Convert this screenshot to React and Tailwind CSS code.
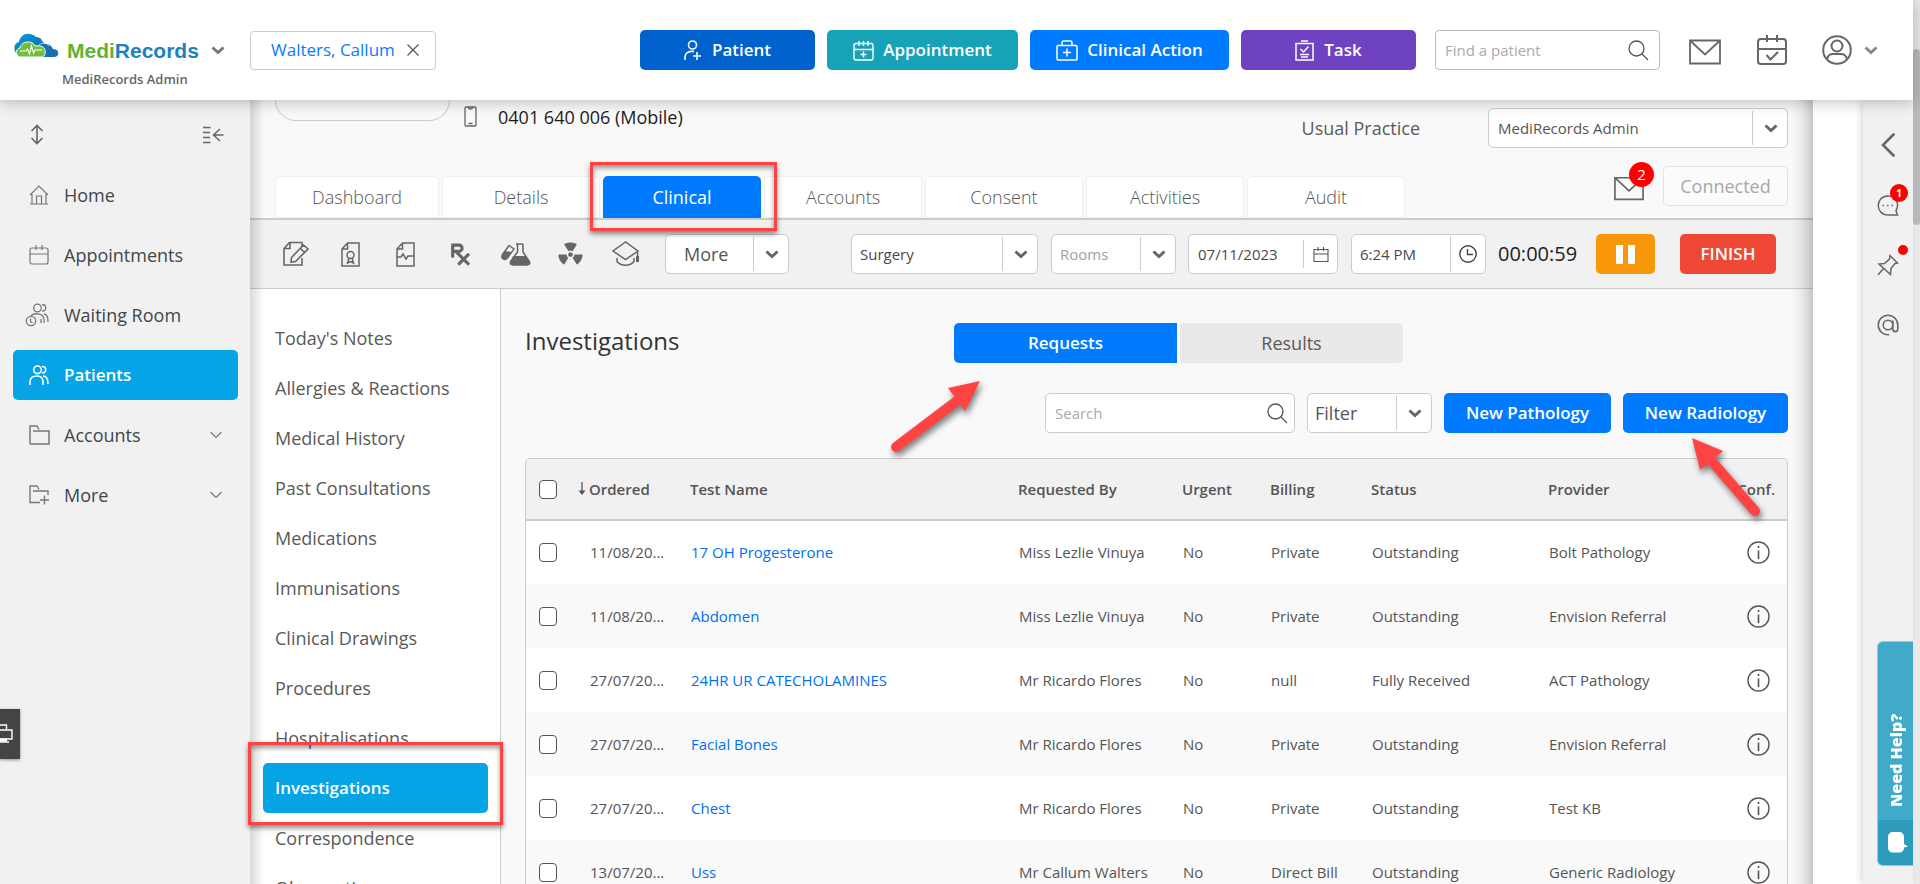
import { FaPrescription, FaRadiation } from "react-icons/fa";

const FONT = "font-['Open_Sans','Noto_Sans',sans-serif]";

function Svg({ w, h, sw = 1.5, children, className = "" }) {
  return (
    <svg
      width={w}
      height={h}
      viewBox={`0 0 ${w} ${h}`}
      fill="none"
      stroke="currentColor"
      strokeWidth={sw}
      className={`shrink-0 ${className}`}
      aria-hidden="true"
    >
      {children}
    </svg>
  );
}

const Chevron = ({ className = "" }) => (
  <Svg w={14} h={9} sw={3} className={className}>
    <path d="M1.500 1.500 7 6.500l5.500-5" />
  </Svg>
);

const ThinChevron = () => (
  <Svg w={12} h={8} sw={1.2} className="text-[#777]">
    <path d="m.5 1 5.500 5.500L11.500 1" />
  </Svg>
);

const SearchIcon = () => (
  <Svg w={21} h={21} sw={1.3} className="text-[#555]">
    <circle cx="8.500" cy="8.500" r="7.500" />
    <path d="m14 14 6 6" />
  </Svg>
);

const MailIcon = ({ w = 32, h = 26 }) => (
  <svg width={w} height={h} viewBox="0 0 32 26" fill="none" stroke="currentColor" strokeWidth="1.800" className="shrink-0" aria-hidden="true">
    <path d="M1 1.500h30v23H1zM1.500 2 16 15.500 30.500 2" />
  </svg>
);

function Logo() {
  return (
    <svg width="45" height="25" viewBox="0 0 45 25" className="shrink-0" aria-hidden="true">
      <defs>
        <linearGradient id="sky" x1="0" y1="0" x2="1" y2="1">
          <stop offset="0" stopColor="#0aa0e4" />
          <stop offset="1" stopColor="#0a5f9f" />
        </linearGradient>
      </defs>
      <path fill="url(#sky)" d="M2 20C-1 16 0 10 5 9 6 3 11 0 15 1c3 0 5 1 7 3 3 0 5 1 6 4l3 3-4 13H5z" />
      <path fill="#176fae" d="M24 24c-1-5 0-11 5-13 5-1 8 1 10 5 4 0 6 3 5 5 0 2-2 3-4 3z" />
      <path fill="none" stroke="#fff" strokeWidth=".7" d="M25 12c3-3 8-2 10 1" />
      <path fill="#72bf3f" stroke="#fff" strokeWidth="1" d="M6 24c-5-1-5-8 0-9 1-4 4-6 8-6 3 0 6 1 7 4 6-1 10 1 10 5 1 3-1 6-4 6z" />
      <path fill="none" stroke="#fff" strokeWidth="1.100" d="M6 18h6l1.500-2 2 5 2-8 2 7 1.500-3h7" />
    </svg>
  );
}

function SelectBox({ id, label, value, width, cellClass = "", textClass = "", dividerClass = "my-[3px] border-[#ccc]", end = "w-9" }) {
  return (
    <div className={`grid h-10 ${width}`}>
      <select
        id={id}
        aria-label={label}
        defaultValue={value}
        className={`col-start-1 row-start-1 h-10 w-full cursor-pointer appearance-none rounded-[5px] border border-[#ccc] bg-white ${cellClass} ${textClass}`}
      >
        <option>{value}</option>
      </select>
      <span className={`pointer-events-none col-start-1 row-start-1 flex items-center justify-center justify-self-end border-l text-[#666] ${end} ${dividerClass}`}>
        <Chevron />
      </span>
    </div>
  );
}

const personPlus = (
  <Svg w={18} h={21} sw={1.6}>
    <circle cx="8.500" cy="5" r="4" />
    <path d="M1 20v-3c0-4 3-6 9-5.500M13 12v8M9 16h8" />
  </Svg>
);
const calendarPlus = (
  <Svg w={21} h={21} sw={1.4}>
    <rect x="1" y="3.500" width="19" height="16.500" rx="2" />
    <path d="M1 9.500h19M6 1v5M10.500 1v5M15 1v5M10.500 11.500v6M7.500 14.500h6" />
  </Svg>
);
const medicalBag = (
  <Svg w={22} h={21} sw={1.5}>
    <rect x="1" y="5.500" width="20" height="14.500" rx="1" />
    <path d="M6 5V2.500Q6 1 7.500 1h7Q16 1 16 2.500V5M11 8.500v8M7 12.500h8" />
  </Svg>
);
const clipboard = (
  <Svg w={19} h={21} sw={1.5}>
    <path d="M1 3.500h17V20H1zM6 1h7M5.500 9l3 3 5-5.500M5 14.500h9M6 17h7" />
  </Svg>
);

const quickActions = [
  { label: "Patient", icon: personPlus, cls: "w-[175px] bg-[#0062cc]", gap: "gap-[10px]" },
  { label: "Appointment", icon: calendarPlus, cls: "w-[191px] bg-[#17a2b8]", gap: "gap-[9px]" },
  { label: "Clinical Action", icon: medicalBag, cls: "w-[199px] bg-[#007bff]", gap: "gap-[9px]" },
  { label: "Task", icon: clipboard, cls: "w-[175px] bg-[#6f42c1]", gap: "gap-[10px]" },
];

function Header() {
  return (
    <header className="relative z-20 flex h-[100px] shrink-0 items-center bg-white pr-[35px] shadow-[0_2px_14px_rgba(0,0,0,0.25)]">
      <div className="w-[250px] shrink-0 pl-[14px] pt-[22px]">
        <button type="button" className="flex items-baseline">
          <Logo />
          <span className="ml-2 font-['Liberation_Sans',sans-serif] text-[21px] leading-8 font-bold text-[#63b22f]">
            Medi<span className="text-[#1b82bd]">Records</span>
          </span>
          <Chevron className="ml-3 self-center text-[#777]" />
        </button>
        <p className="mt-[2px] pl-12 text-[13px] leading-5 font-semibold text-[#666]">MediRecords Admin</p>
      </div>
      <div className="flex h-[39px] items-center gap-3 rounded-[4px] border border-[#ccc] pr-4 pl-5">
        <a href="#patient" className="text-[17px] text-[#0a7cff]">Walters, Callum</a>
        <button type="button" aria-label="Close patient" className="text-[#555]">
          <Svg w={12} h={12} sw={1.2}><path d="m.5.5 11 11m0-11-11 11" /></Svg>
        </button>
      </div>
      <div className="ml-auto flex items-center gap-3">
        {quickActions.map((a) => (
          <button
            key={a.label}
            type="button"
            className={`flex h-10 items-center justify-center rounded-[5px] text-[17px] font-semibold text-white ${a.cls} ${a.gap}`}
          >
            {a.icon}
            {a.label}
          </button>
        ))}
      </div>
      <form className="ml-[19px] flex h-10 w-[225px] items-center rounded-[4px] border border-[#bbb] pr-[10px] pl-[9px]">
        <input
          aria-label="Find a patient"
          placeholder="Find a patient"
          className="min-w-0 flex-1 text-[15px] outline-none placeholder:text-[#aaa]"
        />
        <button type="button" aria-label="Search patients"><SearchIcon /></button>
      </form>
      <div className="ml-[29px] flex items-center text-[#666]">
        <button type="button" aria-label="Messages" className="pt-1"><MailIcon /></button>
        <button type="button" aria-label="Calendar" className="ml-9">
          <Svg w={30} h={30} sw={2}>
            <rect x="1" y="4" width="28" height="25" rx="3" />
            <path d="M1 14h28M10 0v7M20 0v7M9.500 20l4 4.500 7.500-7.500" />
          </Svg>
        </button>
        <button type="button" aria-label="Account" className="ml-[35px] flex items-center gap-3">
          <Svg w={30} h={30} sw={2}>
            <circle cx="15" cy="15" r="13.800" />
            <circle cx="15" cy="11" r="5.500" />
            <path d="M5 24c1-4 3-5 6-5h8c3 0 5 1 6 5" />
          </Svg>
          <Chevron className="text-[#888]" />
        </button>
      </div>
    </header>
  );
}

const people = (
  <>
    <circle cx="8.500" cy="4.800" r="3.800" />
    <path d="M1 20v-3c0-4 3-6 7-6s6 2 6 6v3M13 1.500c5 0 5 6.500 0 6.500M14 11c3.500 0 5 3 5 8" />
  </>
);

const navItems = [
  {
    label: "Home",
    icon: (
      <Svg w={20} h={20} sw={1.2}>
        <path d="M1 10 10 1l9 9M3 9v10M17 9v10M7.500 19v-8h5v8M1 19h18" />
      </Svg>
    ),
  },
  {
    label: "Appointments",
    icon: (
      <Svg w={20} h={20} sw={1.2}>
        <rect x="1" y="3" width="18" height="16" rx="2" />
        <path d="M1 9h18M7 0v5M13 0v5" />
      </Svg>
    ),
  },
  {
    label: "Waiting Room",
    icon: (
      <Svg w={24} h={24} sw={1.3} className="-ml-1">
        <circle cx="12.500" cy="5" r="3.800" />
        <path d="M6 13c2-3 13-4 13 4v3M17 1.500c5 0 5 6.500 0 6.500M19 11c3 0 4 3 4 8M16 20v-4" />
        <circle cx="6" cy="18" r="4.700" />
        <path d="M5.500 15.500v3l2 1.500" />
      </Svg>
    ),
  },
  { label: "Patients", active: true, icon: <Svg w={20} h={20} sw={1.6}>{people}</Svg> },
  {
    label: "Accounts",
    expandable: true,
    icon: (
      <Svg w={21} h={20} sw={1.5}>
        <path d="M1 19V1h7l2 3.500M1 19h19V6H4" />
      </Svg>
    ),
  },
  {
    label: "More",
    expandable: true,
    icon: (
      <Svg w={21} h={20} sw={1.4}>
        <path d="M11 17.500H1V1h7l2 3.500M4 6h15v4M15.500 10.500v9M11 15h9" />
      </Svg>
    ),
  },
];

function Sidebar() {
  return (
    <aside className="relative flex w-[250px] shrink-0 flex-col bg-[#f1f1f1] pt-6">
      <div className="flex items-center justify-between pr-[26px] pl-[30px] text-[#666]">
        <button type="button" aria-label="Resize menu">
          <Svg w={14} h={21} sw={1.6}>
            <path d="M7 2v17M1.500 7 7 1.500 12.500 7M1.500 14 7 19.500l5.500-5.500" />
          </Svg>
        </button>
        <button type="button" aria-label="Collapse menu">
          <Svg w={21} h={18} sw={1.5}>
            <path d="M0 1.500h7.500M0 6.500h7M0 11.500h7M0 16.500h7.500M20.500 9H11M17 3l-6.500 6 6.500 6" />
          </Svg>
        </button>
      </div>
      <nav className="mt-[25px] flex flex-col gap-[10px] pr-3 pl-[13px]" aria-label="Main">
        {navItems.map((n) => (
          <a
            key={n.label}
            href={`#${n.label}`}
            className={
              n.active
                ? "flex h-[50px] items-center rounded-[5px] bg-[#05a4e7] px-4 text-[17px] font-semibold text-white"
                : "flex h-[50px] items-center px-4 text-[18px] font-medium text-[#3f464c]"
            }
          >
            <span className={n.active ? "flex w-[35px]" : "flex w-[35px] text-[#777]"}>{n.icon}</span>
            <span className="flex-1">{n.label}</span>
            {n.expandable && <ThinChevron />}
          </a>
        ))}
      </nav>
      <button
        type="button"
        aria-label="Print"
        className="absolute top-[609px] left-0 flex h-[50px] w-5 items-center bg-[#444] text-white shadow-[0_1px_3px_rgba(0,0,0,0.4)]"
      >
        <Svg w={13} h={20} sw={1.4}>
          <path d="M0 1h6.500v4M0 6h12v9H0M0 18h9" />
          <path d="M0 16h7" strokeWidth="3" />
        </Svg>
      </button>
    </aside>
  );
}

const page = "M6.500 1H18v23H1V7zM6.500 1v6H1";
const tools = [
  {
    label: "Notes",
    icon: (
      <Svg w={26} h={26} sw={1.6}>
        <path d="M19 6V1.500H6.500L1 7.500V24h18v-7M7 1.500v6H1" />
        <path d="m20.500 4 4.500 4L12.500 20.500 8 21l.5-4.500zM17.500 7.500l4 4" />
      </Svg>
    ),
  },
  {
    label: "Certificate",
    icon: (
      <Svg w={19} h={25} sw={1.5}>
        <path d={page} />
        <circle cx="9.500" cy="13" r="3.500" />
        <path d="m8 16-1.500 5 3-1.500 3 1.500L11 16" />
      </Svg>
    ),
  },
  {
    label: "Observations",
    icon: (
      <Svg w={19} h={25} sw={1.5}>
        <path d={page} />
        <path d="M1 15h4l2-3 3 5 2-3h6" />
      </Svg>
    ),
  },
  { label: "Prescription", icon: <FaPrescription size={25} /> },
  {
    label: "Pathology",
    icon: (
      <Svg w={30} h={23} sw={1.5}>
        <path d="M15 1h7M16.500 1v8L10 18c-1.500 2.500-.5 4 2 4h14c2.500 0 3.500-1.500 2-4L22 9V1" />
        <path d="M12 13h13l3.500 6c.5 2-.5 3-2.500 3H12c-2 0-3-1-2-3.500z" fill="currentColor" stroke="none" />
        <path d="m8 2.500 5 3.500-7 9.500c-3 2.500-6.500-.5-4.500-4z" />
        <path d="m3.500 8 7 1-4.500 6.500c-3 2.500-6.500-.5-4.500-4z" fill="currentColor" stroke="none" />
      </Svg>
    ),
  },
  { label: "Radiology", icon: <FaRadiation size={25} className="rotate-180" /> },
  {
    label: "Education",
    icon: (
      <Svg w={28} h={26} sw={1.5}>
        <path d="M13.500 1 1 10l12.500 8.500L26 10zM25.500 10v6M5 17v3.500c4 5 13 5 17 0V17" />
        <path d="M25.500 15v6" strokeWidth="3" />
      </Svg>
    ),
  },
];

const tabs = ["Dashboard", "Details", "Clinical", "Accounts", "Consent", "Activities", "Audit"];

function PatientBar() {
  return (
    <section className="flex flex-col gap-[18px] border-b-2 border-[#ccc] px-[25px]">
      <div className="flex h-12 items-start justify-between">
        <div className="flex items-start">
          <div className="h-[21px] w-[175px] rounded-b-[24px] border border-t-0 border-[#ccc]" />
          <Svg w={14} h={21} sw={1.3} className="mt-[6px] ml-[14px] text-[#666]">
            <rect x="1" y="1" width="11" height="19" rx="1" />
            <path d="M4 1.500q2.500 3 5 0M4.500 17.500h4" strokeWidth="1.600" />
          </Svg>
          <span className="mt-[5px] ml-5 text-[18px] leading-6 text-[#1c1c1c]">0401 640 006 (Mobile)</span>
        </div>
        <div className="flex items-center gap-[68px] pt-2">
          <label htmlFor="practice" className="text-[18px] font-medium text-[#595959]">Usual Practice</label>
          <SelectBox id="practice" value="MediRecords Admin" width="w-[300px]" cellClass="pl-[9px]" textClass="text-[15px] font-medium text-[#555]" />
        </div>
      </div>
      <div className="flex h-[52px] items-start justify-between">
        <nav className="flex gap-[3px] self-end" aria-label="Patient sections">
          {tabs.map((t, i) =>
            t === "Clinical" ? (
              <a key={t} href="#Clinical" className="relative flex h-[42px] w-[158px] items-center justify-center rounded-t-[5px] bg-[#007bff] text-[18px] text-white">
                {t}
                <span className="pointer-events-none absolute -top-[14px] -left-[13px] z-10 h-[69px] w-[187px] border-[3px] border-[#ff4343] shadow-[0_3px_5px_rgba(0,0,0,0.45),inset_0_3px_5px_rgba(0,0,0,0.4)]" />
              </a>
            ) : (
              <a
                key={t}
                href={`#${t}`}
                className={`flex h-[42px] items-center justify-center rounded-t-[5px] border border-[#efefef] bg-white text-[18px] font-light text-[#555] ${i === 0 ? "w-[164px]" : "w-[158px]"}`}
              >
                {t}
              </a>
            )
          )}
        </nav>
        <div className="flex items-center gap-[19px]">
          <button type="button" aria-label="Patient messages, 2 unread" className="relative mt-1 text-[#666]">
            <MailIcon w={30} h={25} />
            <span className="absolute -top-[14px] -right-[10px] flex size-[25px] items-center justify-center rounded-full bg-[#f00] text-[15px] text-white">2</span>
          </button>
          <button type="button" className="h-10 w-[125px] rounded-[5px] border border-[#e2e2e2] bg-[#fbfbfb] text-[18px] font-medium text-[#a8a8a8]">
            Connected
          </button>
        </div>
      </div>
    </section>
  );
}

function Toolbar() {
  return (
    <section className="flex h-[69px] shrink-0 items-center border-b border-[#ccc] bg-[#f1f1f1] py-[14px] pr-[37px] pl-[18px]">
      {tools.map((t) => (
        <button key={t.label} type="button" aria-label={t.label} className="flex h-10 w-[55px] items-center justify-center text-[#666]">
          {t.icon}
        </button>
      ))}
      <SelectBox label="More actions" value="More" width="ml-3 w-[124px]" cellClass="pl-[18px]" textClass="text-[18px] font-medium text-[#555]" />
      <div className="ml-auto flex items-center">
        <SelectBox label="Location" value="Surgery" width="w-[187px]" cellClass="pl-2" textClass="text-[15px] font-medium text-[#4a4a4a]" />
        <SelectBox label="Room" value="Rooms" width="ml-[13px] w-[125px]" cellClass="pl-2" textClass="text-[15px] text-[#a0a0a0]" />
        <div className="ml-3 flex h-10 w-[150px] items-center rounded-[5px] border border-[#ccc] bg-white pl-[9px]">
          <input aria-label="Date" defaultValue="07/11/2023" className="min-w-0 flex-1 text-[15px] text-[#4a4a4a] outline-none" />
          <button type="button" aria-label="Pick date" className="flex h-7 w-[34px] items-center justify-center border-l border-[#ccc] text-[#555]">
            <Svg w={16} h={17} sw={1.1}>
              <path d="M1 3.500h14V15.500H1zM1 8h14M5 1v4M10.500 1v4" />
            </Svg>
          </button>
        </div>
        <div className="ml-[13px] flex h-10 w-[135px] items-center rounded-[5px] border border-[#ccc] bg-white pl-2">
          <input aria-label="Time" defaultValue="6:24 PM" className="min-w-0 flex-1 text-[15px] text-[#4a4a4a] outline-none" />
          <button type="button" aria-label="Pick time" className="flex h-9 w-[35px] items-center justify-center border-l border-[#ccc] text-[#444]">
            <Svg w={18} h={18} sw={1.4}>
              <circle cx="9" cy="9" r="8.200" />
              <path d="M8.500 4v5.500H14" />
            </Svg>
          </button>
        </div>
        <span className="ml-3 w-[98px] text-[20px] text-[#222]">00:00:59</span>
        <button type="button" aria-label="Pause" className="flex h-10 w-[59px] items-center justify-center gap-[5px] rounded-[5px] bg-[#f8970a]">
          <span className="h-[19px] w-[7px] bg-white" />
          <span className="h-[19px] w-[7px] bg-white" />
        </button>
        <button type="button" className="ml-[25px] h-10 w-24 rounded-[5px] bg-[#f04837] text-[17px] font-semibold text-white">FINISH</button>
      </div>
    </section>
  );
}

const sections = [
  "Today's Notes",
  "Allergies & Reactions",
  "Medical History",
  "Past Consultations",
  "Medications",
  "Immunisations",
  "Clinical Drawings",
  "Procedures",
  "Hospitalisations",
  "Investigations",
  "Correspondence",
  "Observations",
];

function SectionNav() {
  return (
    <nav className="w-[251px] shrink-0 border-r border-[#ccc] bg-white pt-6 pr-3 pl-[13px]" aria-label="Clinical sections">
      {sections.map((s) =>
        s === "Investigations" ? (
          <a key={s} href="#Investigations" className="relative flex h-[50px] items-center rounded-[5px] bg-[#05a4e7] pl-3 text-[17px] font-semibold text-white">
            {s}
            <span className="pointer-events-none absolute -top-[21px] -left-[15px] z-10 h-[83px] w-[255px] border-[3px] border-[#ff4343] shadow-[0_3px_5px_rgba(0,0,0,0.45),inset_0_3px_5px_rgba(0,0,0,0.4)]" />
          </a>
        ) : (
          <a key={s} href={`#${s}`} className="flex h-[50px] items-center pl-3 text-[18px] font-medium text-[#595959]">
            {s}
          </a>
        )
      )}
    </nav>
  );
}

const rows = [
  ["11/08/20...", "17 OH Progesterone", "Miss Lezlie Vinuya", "No", "Private", "Outstanding", "Bolt Pathology"],
  ["11/08/20...", "Abdomen", "Miss Lezlie Vinuya", "No", "Private", "Outstanding", "Envision Referral"],
  ["27/07/20...", "24HR UR CATECHOLAMINES", "Mr Ricardo Flores", "No", "null", "Fully Received", "ACT Pathology"],
  ["27/07/20...", "Facial Bones", "Mr Ricardo Flores", "No", "Private", "Outstanding", "Envision Referral"],
  ["27/07/20...", "Chest", "Mr Ricardo Flores", "No", "Private", "Outstanding", "Test KB"],
  ["13/07/20...", "Uss", "Mr Callum Walters", "No", "Direct Bill", "Outstanding", "Generic Radiology"],
];

const checkbox = "block h-[19px] w-[18px] appearance-none rounded-[4px] border border-[#555] bg-white checked:bg-[#007bff]";

function ResultsTable() {
  return (
    <div className="mt-[25px] overflow-hidden rounded-t-[5px] border border-b-0 border-[#ccc]">
      <table className="w-full table-fixed border-collapse text-left text-[15px] font-medium text-[#555]">
        <colgroup>
          <col className="w-[50px]" />
          <col className="w-[104px]" />
          <col />
          <col className="w-[164px]" />
          <col className="w-[88px]" />
          <col className="w-[101px]" />
          <col className="w-[177px]" />
          <col className="w-[169px]" />
          <col className="w-[80px]" />
        </colgroup>
        <thead>
          <tr className="h-[61px] border-b-2 border-[#ccc] bg-[#f1f1f1]">
            <th className="pl-[13px]">
              <input type="checkbox" aria-label="Select all" className={checkbox} />
            </th>
            <th className="pl-0 font-semibold">
              <span className="flex items-center gap-[3px] pl-[2px]">
                <Svg w={8} h={14} sw={1.3}>
                  <path d="M4 0v12" />
                  <path d="M.5 8.500h7L4 13z" fill="currentColor" stroke="none" />
                </Svg>
                Ordered
              </span>
            </th>
            <th className="pl-[10px] font-semibold">Test Name</th>
            <th className="pl-[10px] font-semibold">Requested By</th>
            <th className="pl-[10px] font-semibold">Urgent</th>
            <th className="pl-[10px] font-semibold">Billing</th>
            <th className="pl-[10px] font-semibold">Status</th>
            <th className="pl-[10px] font-semibold">Provider</th>
            <th className="pr-3 text-right font-semibold">Conf.</th>
          </tr>
        </thead>
        <tbody>
          {rows.map((r, i) => (
            <tr key={i} className="h-16 odd:bg-white even:bg-[#f9f9f9]">
              <td className="pl-[13px]">
                <input type="checkbox" aria-label={`Select ${r[1]}`} className={checkbox} />
              </td>
              <td className="pl-[14px]">{r[0]}</td>
              <td className="pl-[11px]"><a href="#test" className="text-[#0070f5]">{r[1]}</a></td>
              {r.slice(2).map((c, j) => (
                <td key={j} className="pl-[11px]">{c}</td>
              ))}
              <td className="pr-[17px]">
                <button type="button" aria-label="Details" className="ml-auto block">
                  <Svg w={23} h={23} sw={1.4}>
                    <circle cx="11.500" cy="11.500" r="10.500" />
                    <path d="M11.500 9.500V18M11.500 5v2" strokeWidth="1.600" />
                  </Svg>
                </button>
              </td>
            </tr>
          ))}
        </tbody>
      </table>
    </div>
  );
}

const arrowShadow = "pointer-events-none absolute z-10 overflow-visible drop-shadow-[2px_4px_3px_rgba(0,0,0,0.5)]";

function Investigations() {
  return (
    <section className="min-w-0 flex-1 pt-[34px] pr-[25px] pl-6">
      <div className="grid grid-cols-[1fr_auto_1fr] items-start">
        <h1 className="text-[24px] leading-9 text-[#333]">Investigations</h1>
        <div className="relative flex gap-[3px] pl-[44px]">
          <button type="button" className="h-10 w-[223px] rounded-l-[5px] bg-[#007bff] text-[17px] font-semibold text-white">Requests</button>
          <button type="button" className="h-10 w-[223px] rounded-r-[5px] bg-[#eae8e9] text-[18px] font-medium text-[#595959]">Results</button>
          <svg className={`${arrowShadow} top-[58px] -left-[20px]`} width="96" height="76" aria-hidden="true">
            <path d="M6 66 72 16" stroke="#ff4343" strokeWidth="10" strokeLinecap="round" />
            <path d="M90 0 58 7l17 23z" fill="#ff4343" />
          </svg>
        </div>
      </div>
      <div className="mt-[30px] flex justify-end gap-3">
        <form className="flex h-10 w-[250px] items-center rounded-[5px] border border-[#ccc] bg-white pr-[6px] pl-[9px]">
          <input aria-label="Search investigations" placeholder="Search" className="min-w-0 flex-1 text-[15px] outline-none placeholder:text-[#aaa]" />
          <button type="button" aria-label="Search"><SearchIcon /></button>
        </form>
        <SelectBox label="Filter" value="Filter" width="w-[125px]" cellClass="pl-[7px]" textClass="text-[18px] font-medium text-[#555]" />
        <button type="button" className="h-10 w-[167px] rounded-[5px] bg-[#007bff] text-[17px] font-semibold text-white">New Pathology</button>
        <div className="relative">
          <button type="button" className="h-10 w-[165px] rounded-[5px] bg-[#007bff] text-[17px] font-semibold text-white">New Radiology</button>
          <svg className={`${arrowShadow} top-[45px] left-[69px]`} width="72" height="82" aria-hidden="true">
            <path d="M63 73 17 20" stroke="#ff4343" strokeWidth="10" strokeLinecap="round" />
            <path d="m0 0 31 13L8 32z" fill="#ff4343" />
          </svg>
        </div>
      </div>
      <ResultsTable />
    </section>
  );
}

function RightRail() {
  return (
    <aside className="relative flex w-[50px] shrink-0 flex-col items-center gap-[38px] bg-[#f1f1f1] pt-[33px] text-[#666] shadow-[-3px_0_6px_rgba(0,0,0,0.12)]">
      <button type="button" aria-label="Expand panel">
        <Svg w={14} h={24} sw={2.6}><path d="M12.500 1.500 2 12l10.500 10.500" strokeLinecap="round" /></Svg>
      </button>
      <button type="button" aria-label="Chat, 1 unread" className="relative">
        <Svg w={22} h={21} sw={1.5}>
          <path d="M20.500 20h-9.500c-13 0-13-19 0-19 10 0 11 10 8 14.500z" />
          <path d="M5.500 10.500h1.500M10 10.500h1.500M14.500 10.500H16" strokeWidth="1.600" />
        </Svg>
        <span className="absolute -top-[11px] -right-[9px] flex size-[18px] items-center justify-center rounded-full bg-[#f00] text-[10px] font-bold text-white">1</span>
      </button>
      <button type="button" aria-label="Pinned items" className="relative">
        <Svg w={22} h={22} sw={1.5}>
          <path d="m13 1.500 7.500 7.500-2.500.5-4 5-.5 6L2 10l5.500-.5 5-4.500zM6.500 14.500 1 21" />
        </Svg>
        <span className="absolute -top-[9px] -right-[9px] size-[10px] rounded-full bg-[#f00]" />
      </button>
      <button type="button" aria-label="Mentions">
        <Svg w={22} h={22} sw={1.6}>
          <circle cx="11" cy="11" r="4.800" />
          <path d="M15.800 6.500V15c0 3.500 5 3.500 5 0v-4c0-5.500-4.500-9.800-9.800-9.800S1.200 5.500 1.200 11s4.500 9.800 9.800 9.800h1" />
        </Svg>
      </button>
      <button
        type="button"
        className="absolute top-[541px] right-0 flex h-[225px] w-9 flex-col overflow-hidden rounded-l-[6px] border border-r-0 border-[#9cc] bg-[#41a9c9] text-white"
      >
        <span className="flex flex-1 rotate-180 items-start justify-start pt-[13px] text-[16px] leading-9 font-extrabold [writing-mode:vertical-rl]">Need Help?</span>
        <span className="flex h-[45px] w-full items-center justify-center bg-[#2d9cbc]">
          <Svg w={20} h={21} className="ml-[5px]">
            <path d="M5 0h6c3 0 5 2 5 5v7l4 2.500-4 1c0 3-2 5-5 5H5c-3 0-5-2-5-5V5c0-3 2-5 5-5z" fill="currentColor" stroke="none" />
          </Svg>
        </span>
      </button>
    </aside>
  );
}

export default function App() {
  return (
    <div className={`flex h-screen overflow-hidden bg-white ${FONT}`}>
      <div className="flex min-w-0 flex-1 flex-col">
        <Header />
        <div className="flex min-h-0 flex-1">
          <Sidebar />
          <main className="relative flex min-w-0 flex-1 flex-col bg-[#f9f9f9]">
            <PatientBar />
            <Toolbar />
            <div className="flex min-h-0 flex-1">
              <SectionNav />
              <Investigations />
            </div>
            <div className="pointer-events-none absolute inset-y-0 left-0 w-[14px] bg-linear-to-r from-black/15 to-transparent" />
            <div className="pointer-events-none absolute inset-y-0 right-0 w-[22px] bg-linear-to-l from-black/20 via-black/6 to-transparent" />
          </main>
          <div className="w-[50px] shrink-0 bg-white" />
          <RightRail />
        </div>
      </div>
      <div className="w-[7px] shrink-0 bg-[#e9e9e9] pt-[49px]">
        <div className="h-[176px] rounded-full bg-[#b9b9b9]" />
      </div>
    </div>
  );
}
